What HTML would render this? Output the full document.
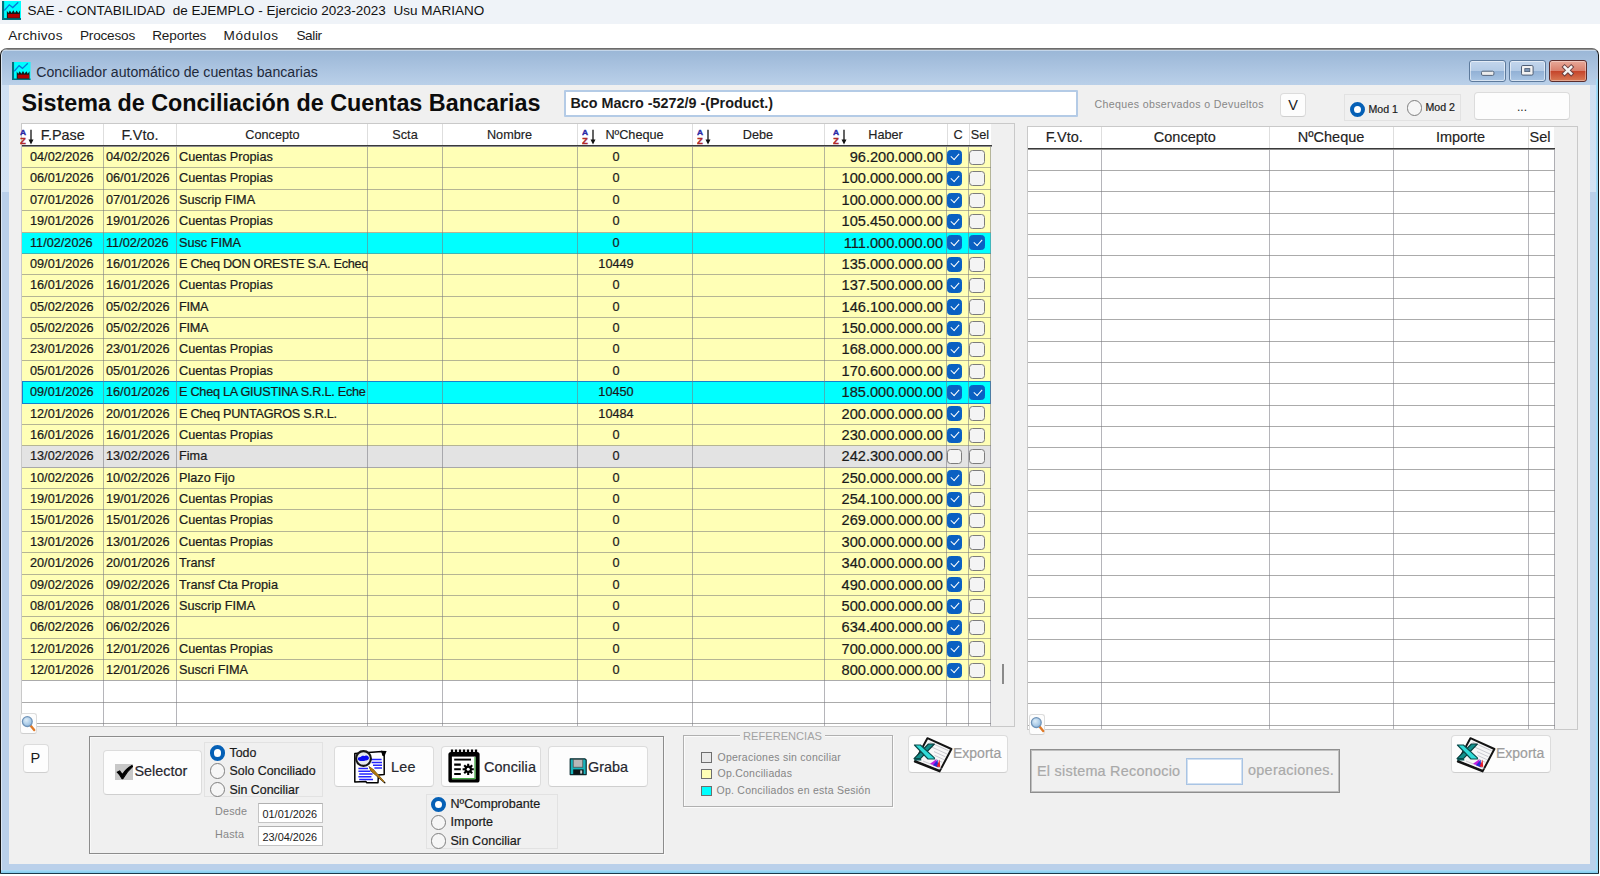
<!DOCTYPE html>
<html lang="es">
<head>
<meta charset="utf-8">
<title>SAE - CONTABILIDAD de EJEMPLO</title>
<style>
*{box-sizing:border-box;margin:0;padding:0}
html,body{width:1600px;height:876px;overflow:hidden;background:#fff}
body{position:relative;font-family:"Liberation Sans",sans-serif;color:#1a1a1a;font-size:12.7px}
.abs{position:absolute}
i{font-style:normal}
/* ---------- top OS title bar + menu ---------- */
#osbar{position:absolute;left:0;top:0;width:1600px;height:24.5px;background:#eff3f8}
#ostitle{position:absolute;left:27.5px;top:0;height:24px;line-height:22px;font-size:13.5px;color:#111;white-space:pre}
#menu{position:absolute;left:0;top:24px;width:1600px;height:25px;background:#fff}
#menu span{position:absolute;top:0;line-height:24px;font-size:13.6px;color:#1b1b1b}
/* ---------- child window frame ---------- */
#frame{position:absolute;left:0;top:48px;width:1599px;height:826px;border:1px solid #161616;border-top-color:#6c6c6c;border-bottom-color:#1a3c4c;border-radius:7px 7px 1px 1px;
 background:linear-gradient(#8f8f8f 0,#8f8f8f 1px,#c4d6ea 1px,#c4d6ea 2px,#9bb7d7 2px,#bad0e9 36px,#cfe0f3 36px,#d3e3f4 143px,#bad0ea 143px,#bad0ea 100%);
 box-shadow:inset 1px 0 0 #dbe7f4}
#frame:after{content:"";position:absolute;left:0;right:0;bottom:0;height:3px;background:linear-gradient(#acdcf5,#7ccdf0)}
#frame:before{content:"";position:absolute;top:30px;bottom:0;right:0;width:2px;background:linear-gradient(90deg,#a9dcf6,#8fd3f4)}
#wtitle{position:absolute;left:36.3px;top:61.7px;line-height:20px;font-size:14.12px;color:#1e2a3c;white-space:pre}
#content{position:absolute;left:9px;top:85px;width:1581px;height:779px;background:#f0f0f0}
.wb{position:absolute;top:60px;height:22px;border:1px solid #5d7a9c;border-radius:3px;
 background:linear-gradient(#c3d6ec 0,#b4cbe6 48%,#92b1d5 52%,#a9c5e4 100%);box-shadow:inset 0 0 0 1px rgba(255,255,255,.55)}
.wb.cl{border-color:#5a2c2c;background:linear-gradient(#e8a999 0,#d9806d 48%,#c5452b 52%,#d97a55 100%);box-shadow:inset 0 0 0 1px rgba(255,255,255,.35)}
/* ---------- heading row ---------- */
#h1{position:absolute;left:21.5px;top:89px;line-height:28px;font-size:23.35px;font-weight:bold;color:#0c0c0c;white-space:pre}
#bank{position:absolute;left:564px;top:90px;width:514px;height:27px;border:2px solid #b4cbe6;background:#fff;border-radius:1px;
 font-size:14.35px;font-weight:bold;line-height:23px;padding-left:4.5px;color:#1a1a1a;white-space:pre}
.glab{color:#878787;font-size:10.6px;letter-spacing:.35px;white-space:pre;position:absolute}
.btn{position:absolute;background:#fdfdfd;border:1px solid #dcdcdc;border-bottom-color:#cfcfcf;border-radius:4px;color:#1a1a1a}
.rgrp{position:absolute;border:1px solid #e2e2e2;background:#f0f0f0}
.rad{position:absolute;width:15.4px;height:15.4px;border-radius:50%;border:1px solid #7e7e7e;background:#f6f6f6}
.rad.on{border:4.5px solid #0560b6;background:#fff}
.rl{position:absolute;white-space:pre;color:#1a1a1a;-webkit-text-stroke:.2px}
/* ---------- grids ---------- */
.grid{position:absolute;border:1px solid #c9c9c9;background:#f0f0f0;overflow:hidden}
.gw{position:absolute;left:0;top:0;background:#fff}
.hd{position:absolute;top:0;height:22px;line-height:22px;text-align:center;white-space:pre;color:#222;-webkit-text-stroke:.15px #222}
.hline{position:absolute;left:0;height:2px;background:linear-gradient(#3a3a3a 0,#3a3a3a 50%,#8c8c8c 50%,#8c8c8c 100%)}
.vl{position:absolute;top:22px;width:1px;background:rgba(120,120,130,.55)}
.vlh{position:absolute;top:0;width:1px;background:#dedede;height:22px}
.hl{position:absolute;left:0;height:1px;background:#ababab}
.row{position:absolute;left:0;width:969px;height:21.375px;line-height:21.4px;border-bottom:1px solid rgba(120,120,120,.55);white-space:pre}
.cps .cp{letter-spacing:-.27px}
.foc:after{content:"";position:absolute;left:0;top:-1px;right:0;bottom:-1px;border:1px solid #1880cc}
.row span{position:absolute;top:0;height:100%;overflow:hidden;-webkit-text-stroke:.22px #1a1a1a}
.ry{background:#ffffb6}.rc{background:#00ffff}.rg{background:#e3e3e3}
.d1{left:8px;width:72px}.d2{left:84px;width:70px}.cp{left:157px;width:188.5px}
.nc{left:554px;width:80px;text-align:center}
.hb{left:802px;width:119px;text-align:right;font-size:14.6px}
.c1{left:925px;width:17px}.c2{left:947.2px;width:17px}
.ck{position:absolute;left:0;top:2.8px;width:15.4px;height:15.2px;border:1px solid #7c7c7c;border-radius:3.5px;background:#f4f4f4}
.ck.on{border-color:#0a60c2;background:#0a60c2}
.ck.on:after{content:"";position:absolute;left:3.4px;top:2.7px;width:7px;height:4px;border-left:1.5px solid #fff;border-bottom:1.5px solid #fff;transform:rotate(-48deg)}
.inp{position:absolute;border:1px solid #c4c4c4;border-top-color:#b0b0b0;background:#fff;font-size:10.9px;line-height:20px;padding-left:3.5px;color:#1a1a1a;white-space:pre}
.lgd{position:absolute;width:10.5px;height:10.5px;border:1px solid #6e6e6e}
.mg{border-radius:3px}
.mg svg{position:absolute;left:0;top:0}
.rgd .vl{top:23px}
.srt{position:absolute;top:1px}
</style>
</head>
<body>
<!-- OS title bar -->
<div id="osbar"></div>
<svg class="abs" style="left:2px;top:1px" width="19" height="19" viewBox="0 0 18 18"><rect width="18" height="18" fill="#00ffff"/><path d="M1 0v17h17" fill="none" stroke="#00707c" stroke-width="2"/><path d="M2.2 9 6.9 3.6 10.2 6.2 15.4 1.2" fill="none" stroke="#0a78d8" stroke-width="1.25"/><path d="M4.6 16.4V9.2l1.4 2.2 1.5-2.4 1.6 2.4 1.6-2.6 1.6 2.6 1.6-2.4 1.5 2.4 1.6-2.4v7.4z" fill="#0c1a1a"/><rect x="5.5" y="12.3" width="11.2" height="3.6" fill="#b40000"/></svg>
<div id="ostitle">SAE - CONTABILIDAD  de EJEMPLO - Ejercicio 2023-2023  Usu MARIANO</div>
<div id="menu"><span style="left:8.2px;letter-spacing:.31px">Archivos</span><span style="left:80px;letter-spacing:-.21px">Procesos</span><span style="left:152.2px;letter-spacing:-.14px">Reportes</span><span style="left:223.6px;letter-spacing:.53px">Módulos</span><span style="left:296.4px;letter-spacing:-.36px">Salir</span></div>

<!-- child window -->
<div id="frame"></div>
<svg class="abs" style="left:12px;top:61.5px" width="18.5" height="18.5" viewBox="0 0 18 18"><rect width="18" height="18" fill="#00ffff"/><path d="M1 0v17h17" fill="none" stroke="#00707c" stroke-width="2"/><path d="M2.2 9 6.9 3.6 10.2 6.2 15.4 1.2" fill="none" stroke="#0a78d8" stroke-width="1.25"/><path d="M4.6 16.4V9.2l1.4 2.2 1.5-2.4 1.6 2.4 1.6-2.6 1.6 2.6 1.6-2.4 1.5 2.4 1.6-2.4v7.4z" fill="#0c1a1a"/><rect x="5.5" y="12.3" width="11.2" height="3.6" fill="#b40000"/></svg>
<div id="wtitle">Conciliador automático de cuentas bancarias</div>
<div class="wb" style="left:1468.6px;width:37.4px"><svg width="35" height="20" viewBox="0 0 35 20"><rect x="11.5" y="10.2" width="12.4" height="4.2" rx="1.3" fill="#ececec" stroke="#55647a"/></svg></div>
<div class="wb" style="left:1508.8px;width:37.2px"><svg width="35" height="20" viewBox="0 0 35 20"><rect x="11.5" y="4.5" width="11.6" height="9.6" rx="1.3" fill="#f2f2f2" stroke="#4e5d74"/><rect x="14.8" y="7.6" width="5" height="3" fill="#7c94b4" stroke="#4a5a70" stroke-width=".8"/></svg></div>
<div class="wb cl" style="left:1549px;width:38px"><svg width="36" height="20" viewBox="0 0 36 20"><path d="M14.6 6 21.2 12.6M21.2 6 14.6 12.6" stroke="#6a4040" stroke-width="4.4" stroke-linecap="square"/><path d="M14.6 6 21.2 12.6M21.2 6 14.6 12.6" stroke="#f4f4f4" stroke-width="2.5" stroke-linecap="square"/></svg></div>
<div id="content"></div>

<!-- heading row -->
<div id="h1">Sistema de Conciliación de Cuentas Bancarias</div>
<div id="bank">Bco Macro -5272/9 -(Product.)</div>
<div class="glab" style="left:1094.5px;top:97px;line-height:14px">Cheques observados o Devueltos</div>
<div class="btn" style="left:1280px;top:92.6px;width:26.4px;height:24.4px;text-align:center;line-height:22px;font-size:14.5px">V</div>
<div class="rgrp" style="left:1344px;top:94px;width:117px;height:27px"></div>
<i class="rad on" style="left:1349.8px;top:101.8px"></i><div class="rl" style="left:1368.5px;top:101.5px;line-height:14px;font-size:10.6px">Mod 1</div>
<i class="rad" style="left:1406.8px;top:100.4px"></i><div class="rl" style="left:1425.5px;top:99.6px;line-height:14px;font-size:10.6px">Mod 2</div>
<div class="btn" style="left:1474px;top:92px;width:96px;height:28.4px;text-align:center;line-height:29.6px;font-size:12px">...</div>

<!-- LEFT GRID -->
<div class="grid" id="lg" style="left:21px;top:123px;width:994px;height:604px">
 <div class="gw" style="width:969px;height:603px"></div>
 <svg class="srt" style="left:559.9px" width="15" height="21" viewBox="0 0 15 21"><text transform="translate(0 10) scale(1 .78)" font-family="Liberation Sans,sans-serif" font-size="8.4" font-weight="bold" fill="#2a2aa6" stroke="#2a2aa6" stroke-width=".4">A</text><text x="0" y="19.2" font-family="Liberation Sans,sans-serif" font-size="9.6" font-weight="bold" fill="#b02a2a" stroke="#b02a2a" stroke-width=".3">Z</text><path d="M11 4.8v11" stroke="#111" stroke-width="1.3"/><path d="M8.5 14.6h5l-2.5 4.8z" fill="#111"/></svg>
 <svg class="srt" style="left:675.4px" width="15" height="21" viewBox="0 0 15 21"><text transform="translate(0 10) scale(1 .78)" font-family="Liberation Sans,sans-serif" font-size="8.4" font-weight="bold" fill="#2a2aa6" stroke="#2a2aa6" stroke-width=".4">A</text><text x="0" y="19.2" font-family="Liberation Sans,sans-serif" font-size="9.6" font-weight="bold" fill="#b02a2a" stroke="#b02a2a" stroke-width=".3">Z</text><path d="M11 4.8v11" stroke="#111" stroke-width="1.3"/><path d="M8.5 14.6h5l-2.5 4.8z" fill="#111"/></svg>
 <svg class="srt" style="left:810.9px" width="15" height="21" viewBox="0 0 15 21"><text transform="translate(0 10) scale(1 .78)" font-family="Liberation Sans,sans-serif" font-size="8.4" font-weight="bold" fill="#2a2aa6" stroke="#2a2aa6" stroke-width=".4">A</text><text x="0" y="19.2" font-family="Liberation Sans,sans-serif" font-size="9.6" font-weight="bold" fill="#b02a2a" stroke="#b02a2a" stroke-width=".3">Z</text><path d="M11 4.8v11" stroke="#111" stroke-width="1.3"/><path d="M8.5 14.6h5l-2.5 4.8z" fill="#111"/></svg>
 <div class="hd" style="left:18.8px;font-size:14.4px;text-align:left">F.Pase</div>
 <div class="hd" style="left:81px;width:74px;font-size:14.4px">F.Vto.</div>
 <div class="hd" style="left:155px;width:191px">Concepto</div>
 <div class="hd" style="left:346px;width:74px">Scta</div>
 <div class="hd" style="left:420px;width:135px">Nombre</div>
 <div class="hd" style="left:555px;width:115px">NºCheque</div>
 <div class="hd" style="left:670px;width:132px">Debe</div>
 <div class="hd" style="left:802px;width:123px">Haber</div>
 <div class="hd" style="left:925px;width:22px">C</div>
 <div class="hd" style="left:947px;width:22px">Sel</div>
<div class="row ry" style="top:23.000px"><span class="d1">04/02/2026</span><span class="d2">04/02/2026</span><span class="cp">Cuentas Propias</span><span class="nc">0</span><span class="hb">96.200.000.00</span><span class="c1"><i class="ck on"></i></span><span class="c2"><i class="ck"></i></span></div>
<div class="row ry" style="top:44.375px"><span class="d1">06/01/2026</span><span class="d2">06/01/2026</span><span class="cp">Cuentas Propias</span><span class="nc">0</span><span class="hb">100.000.000.00</span><span class="c1"><i class="ck on"></i></span><span class="c2"><i class="ck"></i></span></div>
<div class="row ry" style="top:65.750px"><span class="d1">07/01/2026</span><span class="d2">07/01/2026</span><span class="cp">Suscrip FIMA</span><span class="nc">0</span><span class="hb">100.000.000.00</span><span class="c1"><i class="ck on"></i></span><span class="c2"><i class="ck"></i></span></div>
<div class="row ry" style="top:87.125px"><span class="d1">19/01/2026</span><span class="d2">19/01/2026</span><span class="cp">Cuentas Propias</span><span class="nc">0</span><span class="hb">105.450.000.00</span><span class="c1"><i class="ck on"></i></span><span class="c2"><i class="ck"></i></span></div>
<div class="row rc" style="top:108.500px"><span class="d1">11/02/2026</span><span class="d2">11/02/2026</span><span class="cp">Susc FIMA</span><span class="nc">0</span><span class="hb">111.000.000.00</span><span class="c1"><i class="ck on"></i></span><span class="c2"><i class="ck on"></i></span></div>
<div class="row ry cps" style="top:129.875px"><span class="d1">09/01/2026</span><span class="d2">16/01/2026</span><span class="cp">E Cheq DON ORESTE S.A. Echeq</span><span class="nc">10449</span><span class="hb">135.000.000.00</span><span class="c1"><i class="ck on"></i></span><span class="c2"><i class="ck"></i></span></div>
<div class="row ry" style="top:151.250px"><span class="d1">16/01/2026</span><span class="d2">16/01/2026</span><span class="cp">Cuentas Propias</span><span class="nc">0</span><span class="hb">137.500.000.00</span><span class="c1"><i class="ck on"></i></span><span class="c2"><i class="ck"></i></span></div>
<div class="row ry cps" style="top:172.625px"><span class="d1">05/02/2026</span><span class="d2">05/02/2026</span><span class="cp">FIMA</span><span class="nc">0</span><span class="hb">146.100.000.00</span><span class="c1"><i class="ck on"></i></span><span class="c2"><i class="ck"></i></span></div>
<div class="row ry cps" style="top:194.000px"><span class="d1">05/02/2026</span><span class="d2">05/02/2026</span><span class="cp">FIMA</span><span class="nc">0</span><span class="hb">150.000.000.00</span><span class="c1"><i class="ck on"></i></span><span class="c2"><i class="ck"></i></span></div>
<div class="row ry" style="top:215.375px"><span class="d1">23/01/2026</span><span class="d2">23/01/2026</span><span class="cp">Cuentas Propias</span><span class="nc">0</span><span class="hb">168.000.000.00</span><span class="c1"><i class="ck on"></i></span><span class="c2"><i class="ck"></i></span></div>
<div class="row ry" style="top:236.750px"><span class="d1">05/01/2026</span><span class="d2">05/01/2026</span><span class="cp">Cuentas Propias</span><span class="nc">0</span><span class="hb">170.600.000.00</span><span class="c1"><i class="ck on"></i></span><span class="c2"><i class="ck"></i></span></div>
<div class="row rc cps foc" style="top:258.125px"><span class="d1">09/01/2026</span><span class="d2">16/01/2026</span><span class="cp">E Cheq LA GIUSTINA S.R.L. Eche</span><span class="nc">10450</span><span class="hb">185.000.000.00</span><span class="c1"><i class="ck on"></i></span><span class="c2"><i class="ck on"></i></span></div>
<div class="row ry cps" style="top:279.500px"><span class="d1">12/01/2026</span><span class="d2">20/01/2026</span><span class="cp">E Cheq PUNTAGROS S.R.L.</span><span class="nc">10484</span><span class="hb">200.000.000.00</span><span class="c1"><i class="ck on"></i></span><span class="c2"><i class="ck"></i></span></div>
<div class="row ry" style="top:300.875px"><span class="d1">16/01/2026</span><span class="d2">16/01/2026</span><span class="cp">Cuentas Propias</span><span class="nc">0</span><span class="hb">230.000.000.00</span><span class="c1"><i class="ck on"></i></span><span class="c2"><i class="ck"></i></span></div>
<div class="row rg" style="top:322.250px"><span class="d1">13/02/2026</span><span class="d2">13/02/2026</span><span class="cp">Fima</span><span class="nc">0</span><span class="hb">242.300.000.00</span><span class="c1"><i class="ck"></i></span><span class="c2"><i class="ck"></i></span></div>
<div class="row ry" style="top:343.625px"><span class="d1">10/02/2026</span><span class="d2">10/02/2026</span><span class="cp">Plazo Fijo</span><span class="nc">0</span><span class="hb">250.000.000.00</span><span class="c1"><i class="ck on"></i></span><span class="c2"><i class="ck"></i></span></div>
<div class="row ry" style="top:365.000px"><span class="d1">19/01/2026</span><span class="d2">19/01/2026</span><span class="cp">Cuentas Propias</span><span class="nc">0</span><span class="hb">254.100.000.00</span><span class="c1"><i class="ck on"></i></span><span class="c2"><i class="ck"></i></span></div>
<div class="row ry" style="top:386.375px"><span class="d1">15/01/2026</span><span class="d2">15/01/2026</span><span class="cp">Cuentas Propias</span><span class="nc">0</span><span class="hb">269.000.000.00</span><span class="c1"><i class="ck on"></i></span><span class="c2"><i class="ck"></i></span></div>
<div class="row ry" style="top:407.750px"><span class="d1">13/01/2026</span><span class="d2">13/01/2026</span><span class="cp">Cuentas Propias</span><span class="nc">0</span><span class="hb">300.000.000.00</span><span class="c1"><i class="ck on"></i></span><span class="c2"><i class="ck"></i></span></div>
<div class="row ry" style="top:429.125px"><span class="d1">20/01/2026</span><span class="d2">20/01/2026</span><span class="cp">Transf</span><span class="nc">0</span><span class="hb">340.000.000.00</span><span class="c1"><i class="ck on"></i></span><span class="c2"><i class="ck"></i></span></div>
<div class="row ry" style="top:450.500px"><span class="d1">09/02/2026</span><span class="d2">09/02/2026</span><span class="cp">Transf Cta Propia</span><span class="nc">0</span><span class="hb">490.000.000.00</span><span class="c1"><i class="ck on"></i></span><span class="c2"><i class="ck"></i></span></div>
<div class="row ry" style="top:471.875px"><span class="d1">08/01/2026</span><span class="d2">08/01/2026</span><span class="cp">Suscrip FIMA</span><span class="nc">0</span><span class="hb">500.000.000.00</span><span class="c1"><i class="ck on"></i></span><span class="c2"><i class="ck"></i></span></div>
<div class="row ry" style="top:493.250px"><span class="d1">06/02/2026</span><span class="d2">06/02/2026</span><span class="cp"></span><span class="nc">0</span><span class="hb">634.400.000.00</span><span class="c1"><i class="ck on"></i></span><span class="c2"><i class="ck"></i></span></div>
<div class="row ry" style="top:514.625px"><span class="d1">12/01/2026</span><span class="d2">12/01/2026</span><span class="cp">Cuentas Propias</span><span class="nc">0</span><span class="hb">700.000.000.00</span><span class="c1"><i class="ck on"></i></span><span class="c2"><i class="ck"></i></span></div>
<div class="row ry" style="top:536.000px"><span class="d1">12/01/2026</span><span class="d2">12/01/2026</span><span class="cp">Suscri FIMA</span><span class="nc">0</span><span class="hb">800.000.000.00</span><span class="c1"><i class="ck on"></i></span><span class="c2"><i class="ck"></i></span></div>
<div class="hl" style="top:556.375px;width:969px"></div>
<div class="hl" style="top:577.750px;width:969px"></div>
<div class="hl" style="top:599.125px;width:969px"></div>
 <div class="vl" style="left:80.5px;height:581px"></div>
 <div class="vl" style="left:154px;height:581px"></div>
 <div class="vl" style="left:345px;height:581px"></div>
 <div class="vl" style="left:420px;height:581px"></div>
 <div class="vl" style="left:554.5px;height:581px"></div>
 <div class="vl" style="left:670px;height:581px"></div>
 <div class="vl" style="left:801.5px;height:581px"></div>
 <div class="vl" style="left:924px;height:581px"></div>
 <div class="vl" style="left:946.3px;height:581px"></div>
 <div class="vl" style="left:968.2px;height:581px"></div>
 <div class="vlh" style="left:80.5px"></div>
 <div class="vlh" style="left:154px"></div>
 <div class="vlh" style="left:345px"></div>
 <div class="vlh" style="left:420px"></div>
 <div class="vlh" style="left:554.5px"></div>
 <div class="vlh" style="left:670px"></div>
 <div class="vlh" style="left:801.5px"></div>
 <div class="vlh" style="left:924.5px"></div>
 <div class="vlh" style="left:946.5px"></div>
 <div class="hline" style="top:21px;width:970px"></div>
</div>

<div class="abs" style="left:1002px;top:664px;width:2px;height:19.5px;background:#8a8a8a"></div>
<svg class="abs" style="left:19.9px;top:125px" width="15" height="21" viewBox="0 0 15 21"><text transform="translate(0 10) scale(1 .78)" font-family="Liberation Sans,sans-serif" font-size="8.4" font-weight="bold" fill="#2a2aa6" stroke="#2a2aa6" stroke-width=".4">A</text><text x="0" y="19.2" font-family="Liberation Sans,sans-serif" font-size="9.6" font-weight="bold" fill="#b02a2a" stroke="#b02a2a" stroke-width=".3">Z</text><path d="M11 4.8v11" stroke="#111" stroke-width="1.3"/><path d="M8.5 14.6h5l-2.5 4.8z" fill="#111"/></svg>
<!-- RIGHT GRID -->
<div class="grid rgd" id="rg" style="left:1027px;top:125.5px;width:550.6px;height:604px">
 <div class="gw" style="width:526px;height:603px"></div>
 <div class="hd" style="left:0;width:72.5px;font-size:14.5px;line-height:21.6px">F.Vto.</div>
 <div class="hd" style="left:72.5px;width:168.7px;font-size:14.5px;line-height:21.6px">Concepto</div>
 <div class="hd" style="left:241.2px;width:123.8px;font-size:14.5px;line-height:21.6px">NºCheque</div>
 <div class="hd" style="left:365px;width:135px;font-size:14.5px;line-height:21.6px">Importe</div>
 <div class="hd" style="left:499px;width:26px;font-size:14.5px;line-height:21.6px">Sel</div>
<div class="hl" style="top:43.533px;width:527px"></div>
<div class="hl" style="top:64.866px;width:527px"></div>
<div class="hl" style="top:86.199px;width:527px"></div>
<div class="hl" style="top:107.532px;width:527px"></div>
<div class="hl" style="top:128.865px;width:527px"></div>
<div class="hl" style="top:150.198px;width:527px"></div>
<div class="hl" style="top:171.531px;width:527px"></div>
<div class="hl" style="top:192.864px;width:527px"></div>
<div class="hl" style="top:214.197px;width:527px"></div>
<div class="hl" style="top:235.530px;width:527px"></div>
<div class="hl" style="top:256.863px;width:527px"></div>
<div class="hl" style="top:278.196px;width:527px"></div>
<div class="hl" style="top:299.529px;width:527px"></div>
<div class="hl" style="top:320.862px;width:527px"></div>
<div class="hl" style="top:342.195px;width:527px"></div>
<div class="hl" style="top:363.528px;width:527px"></div>
<div class="hl" style="top:384.861px;width:527px"></div>
<div class="hl" style="top:406.194px;width:527px"></div>
<div class="hl" style="top:427.527px;width:527px"></div>
<div class="hl" style="top:448.860px;width:527px"></div>
<div class="hl" style="top:470.193px;width:527px"></div>
<div class="hl" style="top:491.526px;width:527px"></div>
<div class="hl" style="top:512.859px;width:527px"></div>
<div class="hl" style="top:534.192px;width:527px"></div>
<div class="hl" style="top:555.525px;width:527px"></div>
<div class="hl" style="top:576.858px;width:527px"></div>
<div class="hl" style="top:598.191px;width:527px"></div>
 <div class="vl" style="left:72.5px;height:580px"></div>
 <div class="vl" style="left:241.2px;height:580px"></div>
 <div class="vl" style="left:365px;height:580px"></div>
 <div class="vl" style="left:500px;height:580px"></div>
 <div class="vl" style="left:525.8px;height:580px"></div>
 <div class="vlh" style="left:72.5px;height:23px"></div>
 <div class="vlh" style="left:241.2px;height:23px"></div>
 <div class="vlh" style="left:365px;height:23px"></div>
 <div class="vlh" style="left:500px;height:23px"></div>
 <div class="hline" style="top:21.8px;width:527px"></div>
</div>
</div>

<!-- magnifier mini buttons -->
<div class="btn mg" style="left:20px;top:712.5px;width:16.5px;height:21.5px"><svg width="15" height="20" viewBox="0 0 15 20"><defs><radialGradient id="lens" cx=".4" cy=".35" r=".7"><stop offset="0" stop-color="#dcecf8"/><stop offset="1" stop-color="#8fb9de"/></radialGradient></defs><path d="M9.5 11.5 13.2 16" stroke="#e07a28" stroke-width="2.4" stroke-linecap="round"/><circle cx="6.3" cy="7.6" r="4.9" fill="url(#lens)" stroke="#6f93b8" stroke-width="1.3"/></svg></div>
<div class="btn mg" style="left:1028.5px;top:713.5px;width:16.5px;height:21.5px"><svg width="15" height="20" viewBox="0 0 15 20"><path d="M9.5 11.5 13.2 16" stroke="#e07a28" stroke-width="2.4" stroke-linecap="round"/><circle cx="6.3" cy="7.6" r="4.9" fill="url(#lens)" stroke="#6f93b8" stroke-width="1.3"/></svg></div>

<!-- P button -->
<div class="btn" style="left:23px;top:744px;width:25.5px;height:29px;text-align:center;line-height:27px;font-size:14.5px;padding-right:1px">P</div>

<!-- main control panel -->
<div class="abs" style="left:89px;top:736px;width:575px;height:118px;border:1px solid #8c8c8c;box-shadow:inset 1px 1px 0 #f8f8f8,1px 1px 0 #f8f8f8"></div>
<div class="btn" style="left:102.8px;top:749.5px;width:99.4px;height:45px"></div>
<svg class="abs" style="left:115px;top:763.5px" width="18" height="16.5" viewBox="0 0 18 16.5"><rect width="18" height="16.5" fill="#c8c8c8"/><path d="M2.2 8.2 4.6 6.9 7.4 10.6C10 6.6 13.3 3.6 17 1.6L17.6 2.6C14 5.6 10.6 9.8 8 14.6H6.9C5.6 12 4 9.8 2.2 8.2Z" fill="#000" stroke="#000" stroke-width="1.1" stroke-linejoin="round"/></svg>
<div class="rl" style="left:134.5px;top:761px;line-height:20px;font-size:14.4px;color:#26262e">Selector</div>

<div class="rgrp" style="left:204.4px;top:742.4px;width:118.4px;height:54.8px"></div>
<i class="rad on" style="left:210px;top:745.3px"></i><div class="rl" style="left:229.5px;top:746px;line-height:15px;font-size:12.4px">Todo</div>
<i class="rad" style="left:210px;top:763.3px"></i><div class="rl" style="left:229.5px;top:764px;line-height:15px;font-size:12.4px">Solo Conciliado</div>
<i class="rad" style="left:210px;top:782px"></i><div class="rl" style="left:229.5px;top:783px;line-height:15px;font-size:12.4px">Sin Conciliar</div>
<div class="glab" style="left:215px;top:804.4px;line-height:14px;font-size:10.8px;letter-spacing:.2px">Desde</div>
<div class="glab" style="left:215px;top:827.4px;line-height:14px;font-size:10.8px;letter-spacing:.2px">Hasta</div>
<div class="inp" style="left:258px;top:802.6px;width:65px;height:20.8px">01/01/2026</div>
<div class="inp" style="left:258px;top:825.6px;width:65px;height:20.8px">23/04/2026</div>

<div class="btn" style="left:334px;top:746px;width:100px;height:41.4px"></div>
<div class="btn" style="left:441px;top:746px;width:100px;height:41.4px"></div>
<div class="btn" style="left:548px;top:746px;width:100px;height:41.4px"></div>
<!-- Lee icon -->
<svg class="abs" style="left:353.5px;top:750px" width="33" height="34" viewBox="0 0 33 34"><path d="M.8 3.4 28 1.6 30.2 5.4V24.4L24.4 25 24 32.8H12.8L11.8 31.6.8 32Z" fill="#fff" stroke="#000" stroke-width="1.5" stroke-linejoin="round"/><path d="M27 .8 32.6 1 30.4 6.4 28.4 5.8Z" fill="#000"/><path d="M16 9.6H27.6M17.6 12.4H28M19 15.2H28M20.4 18H28M4.4 18.4H14M4.4 21.2H16.4M5.2 24H18.6M4.4 26.8H17.4M5.2 29.4H19" stroke="#2424ff" stroke-width="1.5"/><path d="M14.4 15.8 19.6 19.4 31.8 33 30.6 33.4 16.6 21Z" fill="#1c1200"/><path d="M16 17.6 19.4 20.2 29.6 31.4 17.4 20.6Z" fill="#b07810" stroke="#b07810" stroke-width="1.2" stroke-linejoin="round"/><circle cx="9.5" cy="8.5" r="7.4" fill="#e6e9ee" stroke="#161616" stroke-width="2.1"/><path d="M3.8 8.6C4.6 6.4 6.2 7.4 7.2 6.4 8.6 5 9.8 6.6 11.2 5.8 13 4.8 14.6 6.2 15 7.8 15.2 9.6 13.2 10.6 11.4 10.4 9.6 11.4 7.6 10.8 6 11 4.6 10.8 3.6 9.8 3.8 8.6Z" fill="#0c0cf4"/></svg>
<div class="rl" style="left:391px;top:756.5px;line-height:20px;font-size:14.4px;letter-spacing:.3px;color:#26262e">Lee</div>
<!-- Concilia icon -->
<svg class="abs" style="left:447.5px;top:749px" width="32.5" height="34.5" viewBox="0 0 32.5 34.5"><rect x=".4" y="3" width="31.2" height="30.6" rx="2.6" fill="#000"/><rect x="3.9" y="7.6" width="23.6" height="22.6" fill="#fff"/><path d="M4 29.6H27.2M27 8V30" stroke="#45a845" stroke-width="1.3" fill="none"/><path d="M4 .4v6M8 .4v6M12 .4v6M16 .4v6M20 .4v6M24 .4v6M28 .4v6" stroke="#000" stroke-width="2.3"/><path d="M6.2 10.6H23" stroke="#000" stroke-width="1.9"/><path d="M6.2 15.6H12.8M6.2 20.3H12.8M6.2 25H12.8" stroke="#000" stroke-width="2.1"/><g transform="translate(20.2 20.3)"><circle r="3.7" fill="#000"/><path d="M0-5.6V5.6M-5.6 0H5.6M-4-4 4 4M-4 4 4-4" stroke="#000" stroke-width="2.1"/><circle r="1.5" fill="#fff"/></g></svg>
<div class="rl" style="left:484px;top:756.5px;line-height:20px;font-size:14.4px;letter-spacing:.1px;color:#26262e">Concilia</div>
<!-- Graba icon -->
<svg class="abs" style="left:568.5px;top:758px" width="18" height="17.5" viewBox="0 0 18 17.5"><path d="M1.2.8H16L17.2 2V16.6H1.2Z" fill="#18b4bc" stroke="#0c2c30" stroke-width="1.2" stroke-linejoin="round"/><rect x="4.2" y="1.6" width="9.6" height="7.6" fill="#b8b8b8" stroke="#4a4a4a" stroke-width=".7"/><rect x="4.2" y="11.4" width="10.4" height="5.2" fill="#0c1416"/><rect x="11.2" y="12.4" width="2" height="3.2" fill="#c8d0d0"/></svg>
<div class="rl" style="left:588px;top:756.5px;line-height:20px;font-size:14.4px;color:#26262e">Graba</div>

<div class="rgrp" style="left:426px;top:793.5px;width:131.5px;height:55px"></div>
<i class="rad on" style="left:431px;top:796.6px"></i><div class="rl" style="left:450.5px;top:797px;line-height:15px;font-size:12.55px">NºComprobante</div>
<i class="rad" style="left:431px;top:814.6px"></i><div class="rl" style="left:450.5px;top:815px;line-height:15px;font-size:12.55px">Importe</div>
<i class="rad" style="left:431px;top:833.4px"></i><div class="rl" style="left:450.5px;top:834px;line-height:15px;font-size:12.55px">Sin Conciliar</div>

<!-- referencias -->
<div class="abs" style="left:683px;top:735px;width:210px;height:72px;border:1px solid #b0b0b0;box-shadow:inset 1px 1px 0 #fbfbfb,1px 1px 0 #fbfbfb"></div>
<div class="abs" style="left:740px;top:729px;width:85px;height:14px;background:#f0f0f0;text-align:center;line-height:14px;font-size:11.1px;color:#a2a2a2;white-space:pre">REFERENCIAS</div>
<div class="lgd" style="left:701px;top:752px;background:#e9e9e9"></div><div class="glab" style="left:717.5px;top:750px;line-height:14px;font-size:10.5px;letter-spacing:.25px;color:#858585">Operaciones sin conciliar</div>
<div class="lgd" style="left:701px;top:768.5px;background:#ffffb6"></div><div class="glab" style="left:717.5px;top:766.4px;line-height:14px;font-size:10.5px;letter-spacing:.25px;color:#858585">Op.Conciliadas</div>
<div class="lgd" style="left:701px;top:785.5px;background:#00ffff"></div><div class="glab" style="left:716.5px;top:782.9px;line-height:14px;font-size:10.5px;letter-spacing:.25px;color:#858585">Op. Conciliados en esta Sesión</div>

<!-- exporta buttons -->
<div class="btn" style="left:908px;top:735px;width:100.4px;height:38.4px"></div>
<svg class="abs" style="left:912.5px;top:736.5px" width="40" height="36" viewBox="0 0 40 36"><use href="#xl"/></svg>
<div class="rl" style="left:953px;top:743.3px;line-height:20px;font-size:14px;color:#9d9d9d">Exporta</div>
<div class="btn" style="left:1451px;top:735px;width:100.4px;height:38.4px"></div>
<svg class="abs" style="left:1455.5px;top:736.5px" width="40" height="36" viewBox="0 0 40 36"><g id="xl"><path d="M14.4 1.2 38.4 12 26.6 34.4 1.8 24.6Z" fill="#f7f7f7" stroke="#141414" stroke-width="2" stroke-linejoin="round"/><path d="M16.5 5.2 35.6 13.8M15 8.4 34 17M21 14.6 32.4 19.8M21.6 18.4 30.8 22.6M10 24 28.4 31.4M22 22 29.4 25.4" stroke="#c4c4cc" stroke-width=".9"/><path d="M2.4 24 26.4 33.6" stroke="#141414" stroke-width="1.7"/><path d="M17 26.8 23.4 22.2 24 29.8Z" fill="#c020e0"/><path d="M20 28.2 24.6 22.8 25.4 30.4Z" fill="#2a2ad8"/><path d="M23.6 29.6 26.6 22.4 27.2 30Z" fill="#e8202c"/><path d="M15.4 7 21.4 7 7.4 21.6 1 21.6Z" fill="#12908c" stroke="#083c3c" stroke-width="1.1" stroke-linejoin="round"/><path d="M1.4 8 7.4 8 21.4 20.8 21.4 22 15 22Z" fill="#30dcd8" stroke="#0a4a4a" stroke-width="1.1" stroke-linejoin="round"/><path d="M1 21.6 8 21.6 8.4 23.4 1.6 23.4Z" fill="#0a5a58"/></g></svg>
<div class="rl" style="left:1496px;top:743.3px;line-height:20px;font-size:14px;color:#9d9d9d">Exporta</div>

<!-- reconocio box -->
<div class="abs" style="left:1030px;top:749px;width:309.5px;height:43.5px;border:1px solid #8e8e8e;box-shadow:inset 0 0 0 1px rgba(142,142,142,.5)"></div>
<div class="rl" style="left:1037px;top:761px;line-height:20px;font-size:14.4px;letter-spacing:.25px;color:#a9a9a9">El sistema Reconocio</div>
<div class="abs" style="left:1186px;top:757.5px;width:56.5px;height:27px;border:1px solid #a9c4e4;box-shadow:inset 0 0 0 1px rgba(171,198,230,.55);background:#fff"></div>
<div class="rl" style="left:1248px;top:760px;line-height:20px;font-size:14.4px;letter-spacing:.3px;color:#a9a9a9">operaciones.</div>
</body>
</html>
